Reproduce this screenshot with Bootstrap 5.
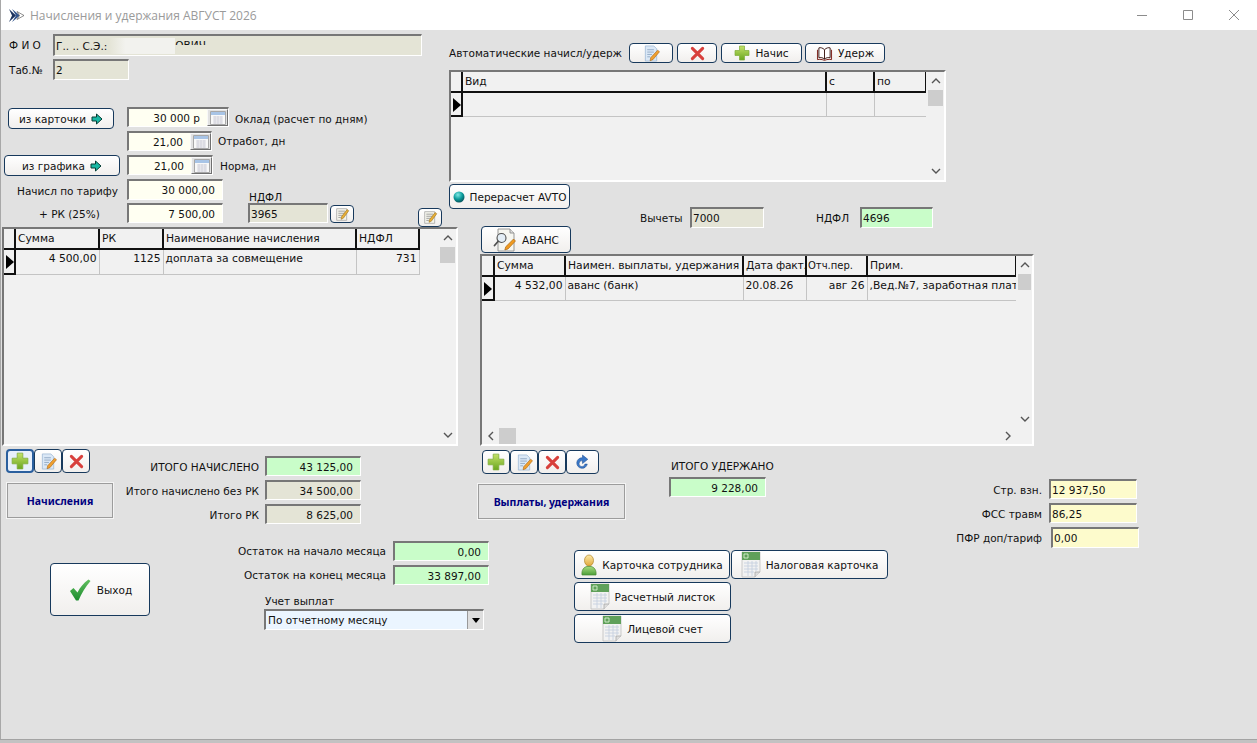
<!DOCTYPE html>
<html lang="ru">
<head>
<meta charset="UTF-8">
<title>Начисления и удержания АВГУСТ 2026</title>
<link href="https://cdn.jsdelivr.net/npm/bootstrap@5.3.0/dist/css/bootstrap.min.css" rel="stylesheet">
<style>
  html, body { height: 743px; overflow: hidden; background: #c2c2c2; }
  body { font: 10.5px/14px "DejaVu Sans", sans-serif; color: #111; white-space: nowrap; }
  .app-window { height: 740px; width: 1257px; background: #e1e1e1; border-bottom: 1px solid #a3a3a3; box-shadow: inset 1px 0 0 #a8a8a8; }
  .title-bar { height: 30px; background: #fff; color: #9a9a9a; font: 12px "Open Sans", sans-serif; box-shadow: inset 1px 0 0 #a8a8a8; }
  .title-bar .logo { margin: 0 6px 0 9px; }
  .win-btn { width: 46px; }

  .top-left { width: 449px; flex: none; }
  .top-right { width: 808px; flex: none; }
  .bottom-main { width: 950px; flex: none; }

  .fld { box-sizing: border-box; border: solid; border-width: 2px 1px 1px 2px; border-color: #777 #fff #fff #777; padding: 0 1px; display: flex; align-items: center; white-space: nowrap; overflow: hidden; flex: none; }
  .fld.num { justify-content: flex-end; padding-right: 7px; }
  .fld-khaki { background: #e4e4d6; }
  .fld-cream { background: #fffff2; }
  .fld-green { background: #c9fdc9; }
  .fld-yellow { background: #fdfbcc; }
  .fld-blue { background: #ebf5ff; }
  .fld.has-cal { padding-right: 0; }
  .cal-btn { width: 21px; height: 100%; margin-left: 7px; background: #e2e2e2; border: 1px solid; border-color: #f8f8f8 #707070 #707070 #f8f8f8; display: flex; align-items: center; justify-content: center; flex: none; }

  .form-btn.btn { --bs-btn-padding-x: 0; --bs-btn-padding-y: 0; --bs-btn-font-size: 10.5px; --bs-btn-line-height: 14px; --bs-btn-border-radius: 4px; --bs-btn-border-color: #17395c; --bs-btn-color: #111; --bs-btn-hover-color: #111; --bs-btn-hover-border-color: #17395c; --bs-btn-font-family: inherit; background: linear-gradient(#fff, #f1efed); display: inline-flex; align-items: center; justify-content: center; gap: 5px; flex: none; white-space: nowrap; }
  .form-btn.btn:hover { background: linear-gradient(#fff, #f1efed); }
  .form-btn.is-on.btn { --bs-btn-border-color: #2a5f9e; --bs-btn-hover-border-color: #2a5f9e; background: #e8f0fb; border-width: 2px; }

  .caption-box { box-sizing: border-box; border: 1px solid #9c9c9c; box-shadow: 0 0 0 1px #f4f4f4; color: #000080; font: bold 10.5px "Noto Sans", sans-serif; display: flex; align-items: center; justify-content: center; background: #e3e3e3; flex: none; }

  .grid-frame { box-sizing: border-box; border: 2px solid; border-color: #777 #fff #fff #777; background: #f1f1f1; display: flex; overflow: hidden; flex: none; }
  .grid-pane { flex: 1 1 auto; min-width: 0; overflow: hidden; }
  .grid-side { width: 18px; flex: none; padding: 0 1px 0 2px; display: flex; flex-direction: column; }
  .arrow-box { height: 18px; display: flex; align-items: center; justify-content: center; flex: none; }
  .thumb-v { height: 16px; background: #cdcdcd; flex: none; }
  .h-scroll { height: 16px; }
  .arrow-h { width: 17px; height: 16px; display: flex; align-items: center; justify-content: center; flex: none; }
  .thumb-h { width: 17px; height: 16px; background: #cdcdcd; flex: none; }

  .data-grid.table { table-layout: fixed; margin: 0; font-size: 10.75px; line-height: 14px; --bs-table-bg: transparent; }
  .tbl-left.table { width: 415px; }
  .tbl-auto.table { width: 475px; }
  .tbl-pay.table { width: 534px; }
  .data-grid.table > :not(caption) > * > * { padding: 0 2px; background: #f1f1f1; border: solid #c4c4c4; border-width: 0 1px 1px 0; box-shadow: none; white-space: nowrap; overflow: hidden; font-weight: 400; color: #111; }
  .data-grid.table thead th { height: 20px; vertical-align: middle; border-color: #111; border-width: 0 2px 2px 0; }
  .data-grid.table thead th.tight { font-size: 10px; padding: 0 1px; }
  .data-grid.table thead th.fit { padding: 0 0 0 2px; letter-spacing: -.25px; }
  .data-grid.table tbody td { height: 24px; vertical-align: top; padding-top: 2px; }
  .tbl-left.table tbody td { height: 25px; }
  .data-grid.table tbody td.mark-cell { padding: 5px 0 0 2px; border-color: #111; border-width: 0 2px 2px 0; }

  .row-fio { margin-top: 4px; height: 22px; }
  .row-tab { margin-top: 3px; height: 21px; }
  .row-okl { margin-top: 27px; height: 22px; }
  .row-otr { margin-top: 2px; height: 20px; padding-left: 127px; }
  .row-nor { margin-top: 4px; height: 21px; }
  .row-tar { margin-top: 3px; height: 21px; }
  .row-rk { margin-top: 3px; height: 20px; }
  .lbl-fio { width: 53px; padding-left: 9px; flex: none; }
  .lbl-tar { width: 127px; padding: 5px 0 0 17px; flex: none; }
  .lbl-rk { width: 127px; padding-left: 39px; flex: none; }
  .f-fio { width: 369px; height: 22px; }
  .f-tab { width: 76px; height: 21px; }
  .redact { width: 66px; height: 16px; margin-left: 2px; background: linear-gradient(90deg, #e4e4d6, #f2f2ee 25%); flex: none; }
  .cut-text { height: 7px; width: 36px; overflow: hidden; align-self: flex-start; margin-top: 2px; }

  .btn-card { margin-left: 8px; width: 106px; height: 21px; margin-top: 1px; }
  .btn-plan { margin-left: 4px; width: 116px; height: 21px; }
  .f-okl { width: 102px; height: 20px; margin-left: 13px; }
  .f-otr { width: 85px; height: 20px; }
  .f-nor { width: 86px; height: 20px; margin-left: 7px; }
  .f-tar { width: 96px; height: 21px; }
  .f-rk { width: 96px; height: 20px; }
  .f-3965 { width: 80px; height: 20px; margin-left: 25px; }
  .btn-ed1 { width: 24px; height: 18px; margin-left: 2px; margin-top: 2px; }
  .btn-ed2 { width: 24px; height: 19px; margin-left: 64px; margin-top: 5px; }
  .lbl-ndfl { margin-left: 26px; padding-top: 11px; }
  .lbl-okl { margin-left: 6px; padding-top: 5px; }
  .lbl-otr { margin-left: 6px; padding-top: 3px; }
  .lbl-nor { margin-left: 7px; padding-top: 4px; }
  .grid-left { margin: 4px 0 0 2px; width: 456px; height: 219px; }
  .c-mark-l { width: 11px; } .c-84 { width: 84px; } .c-64 { width: 64px; } .c-193 { width: 193px; } .c-63 { width: 63px; }

  .row-auto { margin-top: 13px; height: 20px; }
  .lbl-auto { width: 180px; flex: none; }
  .btn-a1 { width: 44px; height: 20px; } .btn-a2 { width: 40px; height: 20px; margin-left: 4px; } .btn-a3 { width: 81px; height: 20px; margin-left: 4px; } .btn-a4 { width: 80px; height: 20px; margin-left: 3px; }
  .grid-auto { margin-top: 7px; width: 497px; height: 112px; }
  .c-mark-a { width: 11px; } .c-364 { width: 364px; } .c-48 { width: 48px; } .c-52 { width: 52px; }
  .btn-recalc { margin-top: 2px; width: 121px; height: 25px; gap: 4px; }
  .row-ded { margin-top: -2px; height: 21px; padding-left: 191px; }
  .lbl-ded { width: 42px; padding-top: 1px; flex: none; }
  .f-ded { width: 74px; height: 21px; margin-left: 8px; }
  .lbl-nd2 { margin-left: 52px; width: 44px; padding-top: 1px; flex: none; }
  .f-nd2 { width: 73px; height: 21px; }
  .btn-avans { margin: -2px 0 0 32px; width: 90px; height: 27px; }
  .grid-pay { margin: 1px 0 0 31px; width: 554px; height: 192px; }
  .grid-pay .grid-pane { height: 172px; }
  .grid-pay .grid-side { height: 172px; width: 16px; }
  .c-mark-p { width: 12px; } .c-71 { width: 71px; } .c-178 { width: 178px; } .c-61 { width: 61px; } .c-149 { width: 149px; }
  .pay-stack { width: 550px; }

  .row-mid { height: 95px; }
  .col-acts { width: 115px; flex: none; }
  .acts-l { padding: 3px 0 0 6px; }
  .acts-l .form-btn { width: 28px; height: 24px; }
  .box-acc { margin: 10px 0 0 7px; width: 106px; height: 35px; }
  .col-tot { width: 363px; flex: none; padding-top: 10px; }
  .tot-row { height: 20px; margin-bottom: 4px; }
  .tot-lbl { width: 144px; text-align: right; flex: none; padding-top: 2px; }
  .tot-row .fld { width: 96px; height: 20px; margin-left: 6px; }
  .col-pay { width: 191px; flex: none; }
  .acts-r { padding: 4px 0 0 4px; }
  .acts-r .form-btn { width: 28px; height: 24px; }
  .acts-r .btn-wide { width: 33px; }
  .box-pay { margin-top: 10px; width: 147px; height: 35px; }
  .col-sum { padding-top: 13px; }
  .lbl-sum { margin-left: 2px; }
  .f-sum { width: 97px; height: 20px; margin-top: 4px; }

  .btn-exit { margin: 22px 0 0 50px; width: 100px; height: 53px; gap: 6px; }
  .col-rest { margin-left: 87px; width: 252px; flex: none; }
  .rest-row { height: 20px; margin-bottom: 4px; }
  .rest-lbl { width: 149px; text-align: right; flex: none; }
  .rest-row .fld { width: 96px; height: 20px; margin-left: 7px; }
  .lbl-acc { margin: 9px 0 1px 28px; }
  .f-sel { width: 220px; height: 21px; margin-left: 27px; padding: 0 0 0 2px; justify-content: space-between; }
  .sel-arrow { width: 16px; height: 100%; background: #dedede; border-left: 1px solid #999; display: flex; align-items: center; justify-content: center; }
  .col-docs { margin: 9px 0 0 85px; }
  .doc-row { margin-bottom: 3px; }
  .btn-d1 { width: 156px; height: 29px; }
  .btn-d2 { width: 157px; height: 29px; margin-left: 1px; }
  .btn-d3 { width: 157px; height: 29px; }

  .side-col { padding-top: 33px; }
  .ins-row { height: 20px; margin-bottom: 4px; }
  .ins-lbl { width: 92px; text-align: right; flex: none; padding-top: 2px; }
  .ins-row .fld { width: 88px; height: 20px; margin-left: 7px; }
  .ins-row .shifted { margin-left: 9px; height: 21px; }
</style>
</head>
<body>
<svg width="0" height="0" class="d-block">
  <defs>
    <linearGradient id="gPlus" x1="0" y1="0" x2="0" y2="1"><stop offset="0" stop-color="#c4e36a"/><stop offset="1" stop-color="#6aa61f"/></linearGradient>
    <linearGradient id="gCheck" x1="0" y1="0" x2="0" y2="1"><stop offset="0" stop-color="#62c060"/><stop offset="1" stop-color="#1c8c2e"/></linearGradient>
    <radialGradient id="gBall" cx=".4" cy=".3" r=".8"><stop offset="0" stop-color="#7fe8e4"/><stop offset=".5" stop-color="#0d9c9c"/><stop offset="1" stop-color="#053f4a"/></radialGradient>
    <linearGradient id="gHead" x1="0" y1="0" x2="0" y2="1"><stop offset="0" stop-color="#fde9a6"/><stop offset="1" stop-color="#e0a83c"/></linearGradient>
    <linearGradient id="gBody" x1="0" y1="0" x2="0" y2="1"><stop offset="0" stop-color="#a8dc80"/><stop offset="1" stop-color="#4c9e38"/></linearGradient>
    <symbol id="i-plus" viewBox="0 0 16 16"><path d="M5.500 1h5v4.500H15v5h-4.500V15h-5v-4.500H1v-5h4.500z" fill="url(#gPlus)" stroke="#7fae3a" stroke-width=".7"/></symbol>
    <symbol id="i-x" viewBox="0 0 16 16"><path d="M2.500 2.500l11 11M13.500 2.500l-11 11" stroke="#d8403c" stroke-width="3.200" stroke-linecap="round"/></symbol>
    <symbol id="i-edit" viewBox="0 0 18 18"><path d="M2.500 1h9l3 3v13h-12z" fill="#dbe8f6" stroke="#9db8d4" stroke-width=".8"/><path d="M4.500 5h7M4.500 7.500h7M4.500 10h5M4.500 12.500h3" stroke="#8aa4c0" stroke-width=".9"/><path d="M15.500 5.500l2 1.600-7 8.400-3 1.200.6-3.200z" fill="#f0a030" stroke="#a86410" stroke-width=".6"/></symbol>
    <symbol id="i-memo" viewBox="0 0 18 18"><path d="M2 2h12v14H2z" fill="#f4f4ec" stroke="#9a9a9a" stroke-width=".8"/><path d="M4 5h8M4 7.500h8M4 10h5M4 12.500h3" stroke="#888" stroke-width=".9"/><path d="M14.500 3l2 1.500-6.500 9-2.800 1.300.5-3z" fill="#e8b038" stroke="#8a6010" stroke-width=".6"/></symbol>
    <symbol id="i-book" viewBox="0 0 18 16"><path d="M9 4C7 1.800 4.500 1.500 3 2v10.500c1.800-.5 4.200-.2 6 1.500 1.800-1.700 4.200-2 6-1.500V2c-1.500-.5-4-.2-6 2zM9 4v10" fill="#fff" stroke="#3a1410" stroke-width="1"/><path d="M1.500 4v10.500c2.500-.5 5-.2 7.500.8 2.500-1 5-1.300 7.500-.8V4" fill="none" stroke="#7a1c14" stroke-width="1"/></symbol>
    <symbol id="i-arrow" viewBox="0 0 12 12"><path d="M1 4h4.500V1L11 6l-5.500 5V8H1z" fill="#18b8a4" stroke="#063c34" stroke-width="1"/></symbol>
    <symbol id="i-cal" viewBox="0 0 16 14"><path d="M.5.5h15v13H.5z" fill="#f8f8f8" stroke="#a8a8a8"/><path d="M1 1h14v3H1z" fill="#a8c4e6"/><path d="M3 6h10M3 8h10M3 10h10M3 12h10M5 5v8M8 5v8M11 5v8" stroke="#c8c8d4" stroke-width=".7"/></symbol>
    <symbol id="i-ball" viewBox="0 0 12 12"><circle cx="6" cy="6" r="5.500" fill="url(#gBall)"/></symbol>
    <symbol id="i-avans" viewBox="0 0 24 24"><path d="M5 1h12l4 4v18H5z" fill="#f6f6f0" stroke="#8c8c8c" stroke-width=".9"/><path d="M17 1v4h4" fill="#ddd" stroke="#8c8c8c" stroke-width=".9"/><circle cx="8.500" cy="10" r="4.500" fill="#e4eef6" stroke="#505050" stroke-width="1.100"/><path d="M5 13.500l-3.500 4" stroke="#505050" stroke-width="1.800" stroke-linecap="round"/><path d="M20.500 11l2 2-7.500 8-3.200 1 .9-3.200z" fill="#f09a20" stroke="#a05c08" stroke-width=".6"/></symbol>
    <symbol id="i-redo" viewBox="0 0 16 16"><path d="M12.500 9.500A5 5 0 1 1 8 3.500V1l5 4-5 4V6.300a2.800 2.800 0 1 0 2.300 3.200z" fill="#3a78c8" stroke="#1c4c90" stroke-width=".5"/></symbol>
    <symbol id="i-check" viewBox="0 0 24 24"><path d="M2 13l3.500-3 4 4.500C12 9.500 15.500 5 20.500 1.500l2 1.500C17.500 9 13.500 15 10.500 22.500H8z" fill="url(#gCheck)"/></symbol>
    <symbol id="i-user" viewBox="0 0 16 22"><ellipse cx="8" cy="6.500" rx="4.500" ry="5.500" fill="url(#gHead)" stroke="#b08428" stroke-width=".7"/><path d="M1 21c-.7-5 2-8 5-8.500h4c3 .5 5.700 3.500 5 8.500z" fill="url(#gBody)" stroke="#4a8a34" stroke-width=".7"/></symbol>
    <symbol id="i-sheet" viewBox="0 0 20 27"><path d="M1 1h18v20l-5 5H1z" fill="#f2f2f2" stroke="#b8b8b8" stroke-width=".7"/><path d="M1 1h18v8H1z" fill="#5fa05a"/><path d="M3 3h4v4H3z" fill="none" stroke="#d8f0d0" stroke-width=".9"/><path d="M3 12h14M3 15h14M3 18h14M3 21h10M7 10v15M11 10v15M15 10v10" stroke="#c6d0e0" stroke-width=".9"/><path d="M14 26v-5h5" fill="#ddd" stroke="#a0a0a0" stroke-width=".7"/></symbol>
    <symbol id="i-up" viewBox="0 0 10 6"><path d="M1 5l4-4 4 4" fill="none" stroke="#555" stroke-width="1.400"/></symbol>
    <symbol id="i-down" viewBox="0 0 10 6"><path d="M1 1l4 4 4-4" fill="none" stroke="#555" stroke-width="1.400"/></symbol>
    <symbol id="i-left" viewBox="0 0 6 10"><path d="M5 1L1 5l4 4" fill="none" stroke="#555" stroke-width="1.400"/></symbol>
    <symbol id="i-right" viewBox="0 0 6 10"><path d="M1 1l4 4-4 4" fill="none" stroke="#555" stroke-width="1.400"/></symbol>
    <symbol id="i-mark" viewBox="0 0 8 14"><path d="M0 0l8 7-8 7z" fill="#000"/></symbol>
  </defs>
</svg>

<div class="app-window d-flex flex-column">
  <div class="title-bar d-flex align-items-center">
    <svg class="logo" width="15" height="13" viewBox="0 0 15 13"><path d="M0 0l7 6.500L0 13l3-6.500z" fill="#1c3460"/><path d="M3 0l8 6.500L3 13l4-6.500z" fill="#33558c"/><path d="M8 2.500l7 4-7 4 2.500-4z" fill="#fff" stroke="#444" stroke-width=".6"/></svg>
    <span>Начисления и удержания АВГУСТ 2026</span>
    <div class="ms-auto d-flex me-0">
      <div class="win-btn d-flex justify-content-center"><svg width="10" height="10"><path d="M0 5.500h10" stroke="#8c8c8c"/></svg></div>
      <div class="win-btn d-flex justify-content-center"><svg width="10" height="10"><path d="M.5.5h9v9h-9z" fill="none" stroke="#8c8c8c"/></svg></div>
      <div class="win-btn d-flex justify-content-center"><svg width="10" height="10"><path d="M0 0l10 10M10 0L0 10" stroke="#8c8c8c"/></svg></div>
    </div>
  </div>

  <div class="d-flex">
    <div class="top-left">
      <div class="row-fio d-flex align-items-center">
        <span class="lbl-fio">Ф И О</span>
        <div class="fld fld-khaki f-fio">
          <span>Г.. .. С.Э.:</span><span class="redact"></span><span class="cut-text">ОВИЧ</span>
        </div>
      </div>
      <div class="row-tab d-flex align-items-center">
        <span class="lbl-fio">Таб.№</span>
        <div class="fld fld-khaki f-tab">2</div>
      </div>
      <div class="row-okl d-flex align-items-start">
        <button type="button" class="btn form-btn btn-card">из карточки <svg width="12" height="12"><use href="#i-arrow"/></svg></button>
        <div class="fld fld-cream num has-cal f-okl">30 000 р<span class="cal-btn"><svg width="16" height="14"><use href="#i-cal"/></svg></span></div>
        <span class="lbl-okl">Оклад (расчет по дням)</span>
      </div>
      <div class="row-otr d-flex align-items-start">
        <div class="fld fld-cream num has-cal f-otr">21,00<span class="cal-btn"><svg width="16" height="14"><use href="#i-cal"/></svg></span></div>
        <span class="lbl-otr">Отработ, дн</span>
      </div>
      <div class="row-nor d-flex align-items-start">
        <button type="button" class="btn form-btn btn-plan">из графика <svg width="12" height="12"><use href="#i-arrow"/></svg></button>
        <div class="fld fld-cream num has-cal f-nor">21,00<span class="cal-btn"><svg width="16" height="14"><use href="#i-cal"/></svg></span></div>
        <span class="lbl-nor">Норма, дн</span>
      </div>
      <div class="row-tar d-flex align-items-start">
        <span class="lbl-tar">Начисл по тарифу</span>
        <div class="fld fld-cream num f-tar">30 000,00</div>
        <span class="lbl-ndfl">НДФЛ</span>
      </div>
      <div class="row-rk d-flex align-items-start">
        <span class="lbl-rk pt-1">+ РК (25%)</span>
        <div class="fld fld-cream num f-rk">7 500,00</div>
        <div class="fld fld-khaki f-3965">3965</div>
        <button type="button" class="btn form-btn btn-ed1" aria-label="Правка"><svg width="15" height="15"><use href="#i-memo"/></svg></button>
        <button type="button" class="btn form-btn btn-ed2" aria-label="Правка"><svg width="15" height="15"><use href="#i-memo"/></svg></button>
      </div>
      <div class="grid-frame grid-left">
        <div class="grid-pane">
          <table class="table data-grid tbl-left">
            <colgroup><col class="c-mark-l"><col class="c-84"><col class="c-64"><col class="c-193"><col class="c-63"></colgroup>
            <thead><tr><th></th><th>Сумма</th><th>РК</th><th>Наименование начисления</th><th>НДФЛ</th></tr></thead>
            <tbody><tr><td class="mark-cell"><svg width="8" height="14" class="d-block"><use href="#i-mark"/></svg></td><td class="text-end">4 500,00</td><td class="text-end">1125</td><td>доплата за совмещение</td><td class="text-end">731</td></tr></tbody>
          </table>
        </div>
        <div class="grid-side">
          <div class="arrow-box"><svg width="10" height="6"><use href="#i-up"/></svg></div>
          <div class="thumb-v"></div>
          <div class="flex-grow-1"></div>
          <div class="arrow-box"><svg width="10" height="6"><use href="#i-down"/></svg></div>
        </div>
      </div>
    </div>

    <div class="top-right">
      <div class="row-auto d-flex align-items-center">
        <span class="lbl-auto">Автоматические начисл/удерж</span>
        <button type="button" class="btn form-btn btn-a1" aria-label="Правка"><svg width="17" height="17"><use href="#i-edit"/></svg></button>
        <button type="button" class="btn form-btn btn-a2" aria-label="Удалить"><svg width="15" height="15"><use href="#i-x"/></svg></button>
        <button type="button" class="btn form-btn btn-a3"><svg width="16" height="16"><use href="#i-plus"/></svg>Начис</button>
        <button type="button" class="btn form-btn btn-a4"><svg width="17" height="15"><use href="#i-book"/></svg>Удерж</button>
      </div>
      <div class="grid-frame grid-auto">
        <div class="grid-pane">
          <table class="table data-grid tbl-auto">
            <colgroup><col class="c-mark-a"><col class="c-364"><col class="c-48"><col class="c-52"></colgroup>
            <thead><tr><th></th><th>Вид</th><th>с</th><th>по</th></tr></thead>
            <tbody><tr><td class="mark-cell"><svg width="8" height="14" class="d-block"><use href="#i-mark"/></svg></td><td></td><td></td><td></td></tr></tbody>
          </table>
        </div>
        <div class="grid-side">
          <div class="arrow-box"><svg width="10" height="6"><use href="#i-up"/></svg></div>
          <div class="thumb-v"></div>
          <div class="flex-grow-1"></div>
          <div class="arrow-box"><svg width="10" height="6"><use href="#i-down"/></svg></div>
        </div>
      </div>
      <button type="button" class="btn form-btn btn-recalc"><svg width="12" height="12"><use href="#i-ball"/></svg>Перерасчет AVTO</button>
      <div class="row-ded d-flex align-items-center">
        <span class="lbl-ded">Вычеты</span>
        <div class="fld fld-khaki f-ded">7000</div>
        <span class="lbl-nd2">НДФЛ</span>
        <div class="fld fld-green f-nd2">4696</div>
      </div>
      <button type="button" class="btn form-btn btn-avans d-flex"><svg width="24" height="24"><use href="#i-avans"/></svg>АВАНС</button>
      <div class="grid-frame grid-pay">
        <div class="pay-stack">
          <div class="d-flex">
            <div class="grid-pane">
              <table class="table data-grid tbl-pay">
                <colgroup><col class="c-mark-p"><col class="c-71"><col class="c-178"><col class="c-63"><col class="c-61"><col class="c-149"></colgroup>
                <thead><tr><th></th><th>Сумма</th><th>Наимен. выплаты, удержания</th><th class="fit">Дата факт.</th><th class="tight">Отч.пер.</th><th>Прим.</th></tr></thead>
                <tbody><tr><td class="mark-cell"><svg width="8" height="14" class="d-block"><use href="#i-mark"/></svg></td><td class="text-end">4 532,00</td><td>аванс (банк)</td><td>20.08.26</td><td class="text-end">авг 26</td><td>,Вед.№7, заработная плат</td></tr></tbody>
              </table>
            </div>
            <div class="grid-side">
              <div class="arrow-box"><svg width="10" height="6"><use href="#i-up"/></svg></div>
              <div class="thumb-v"></div>
              <div class="flex-grow-1"></div>
              <div class="arrow-box"><svg width="10" height="6"><use href="#i-down"/></svg></div>
            </div>
          </div>
          <div class="h-scroll d-flex align-items-center">
            <div class="arrow-h"><svg width="6" height="10"><use href="#i-left"/></svg></div>
            <div class="thumb-h"></div>
            <div class="flex-grow-1"></div>
            <div class="arrow-h me-3"><svg width="6" height="10"><use href="#i-right"/></svg></div>
          </div>
        </div>
      </div>
    </div>
  </div>

  <div class="d-flex flex-grow-1">
    <div class="bottom-main">
      <div class="row-mid d-flex">
        <div class="col-acts">
          <div class="acts-l d-flex">
            <button type="button" class="btn form-btn is-on" aria-label="Добавить"><svg width="18" height="18"><use href="#i-plus"/></svg></button>
            <button type="button" class="btn form-btn" aria-label="Правка"><svg width="17" height="17"><use href="#i-edit"/></svg></button>
            <button type="button" class="btn form-btn" aria-label="Удалить"><svg width="15" height="15"><use href="#i-x"/></svg></button>
          </div>
          <div class="caption-box box-acc">Начисления</div>
        </div>
        <div class="col-tot">
          <div class="tot-row d-flex align-items-center"><span class="tot-lbl">ИТОГО НАЧИСЛЕНО</span><div class="fld fld-green num">43 125,00</div></div>
          <div class="tot-row d-flex align-items-center"><span class="tot-lbl">Итого начислено без РК</span><div class="fld fld-khaki num">34 500,00</div></div>
          <div class="tot-row d-flex align-items-center"><span class="tot-lbl">Итого РК</span><div class="fld fld-khaki num">8 625,00</div></div>
        </div>
        <div class="col-pay">
          <div class="acts-r d-flex">
            <button type="button" class="btn form-btn" aria-label="Добавить"><svg width="18" height="18"><use href="#i-plus"/></svg></button>
            <button type="button" class="btn form-btn" aria-label="Правка"><svg width="17" height="17"><use href="#i-edit"/></svg></button>
            <button type="button" class="btn form-btn" aria-label="Удалить"><svg width="15" height="15"><use href="#i-x"/></svg></button>
            <button type="button" class="btn form-btn btn-wide" aria-label="Обновить"><svg width="17" height="17"><use href="#i-redo"/></svg></button>
          </div>
          <div class="caption-box box-pay">Выплаты, удержания</div>
        </div>
        <div class="col-sum">
          <div class="lbl-sum">ИТОГО УДЕРЖАНО</div>
          <div class="fld fld-green num f-sum">9 228,00</div>
        </div>
      </div>

      <div class="d-flex">
        <button type="button" class="btn form-btn btn-exit"><svg width="24" height="24"><use href="#i-check"/></svg>Выход</button>
        <div class="col-rest">
          <div class="rest-row d-flex align-items-center"><span class="rest-lbl">Остаток на начало месяца</span><div class="fld fld-green num">0,00</div></div>
          <div class="rest-row d-flex align-items-center"><span class="rest-lbl">Остаток на конец месяца</span><div class="fld fld-green num">33 897,00</div></div>
          <div class="lbl-acc">Учет выплат</div>
          <div class="fld fld-blue f-sel">По отчетному месяцу<span class="sel-arrow"><svg width="8" height="5"><path d="M0 0h8L4 5z" fill="#000"/></svg></span></div>
        </div>
        <div class="col-docs">
          <div class="doc-row d-flex">
            <button type="button" class="btn form-btn btn-d1"><svg width="16" height="22"><use href="#i-user"/></svg>Карточка сотрудника</button>
            <button type="button" class="btn form-btn btn-d2"><svg width="20" height="27"><use href="#i-sheet"/></svg>Налоговая карточка</button>
          </div>
          <div class="doc-row"><button type="button" class="btn form-btn btn-d3"><svg width="20" height="27"><use href="#i-sheet"/></svg>Расчетный листок</button></div>
          <div class="doc-row"><button type="button" class="btn form-btn btn-d3"><svg width="20" height="27"><use href="#i-sheet"/></svg>Лицевой счет</button></div>
        </div>
      </div>
    </div>
    <div class="side-col">
      <div class="ins-row d-flex align-items-center"><span class="ins-lbl">Стр. взн.</span><div class="fld fld-yellow">12 937,50</div></div>
      <div class="ins-row d-flex align-items-center"><span class="ins-lbl">ФСС травм</span><div class="fld fld-yellow">86,25</div></div>
      <div class="ins-row d-flex align-items-center"><span class="ins-lbl">ПФР доп/тариф</span><div class="fld fld-yellow shifted">0,00</div></div>
    </div>
  </div>
</div>
<script src="https://cdn.jsdelivr.net/npm/bootstrap@5.3.0/dist/js/bootstrap.bundle.min.js"></script>
</body>
</html>
